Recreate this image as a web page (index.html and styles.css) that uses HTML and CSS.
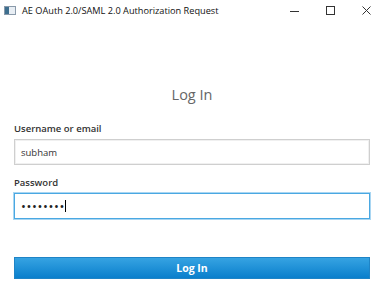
FILE: index.html
```html
<!DOCTYPE html>
<html lang="en">
<head>
    <meta charset="UTF-8">
    <title>AE OAuth 2.0/SAML 2.0 Authorization Request</title>
    <link rel="stylesheet" href="styles.css">
</head>
<body>
    <div class="titlebar">
        <svg class="app-icon" width="12" height="9" viewBox="0 0 12 9">
            <rect x="0.5" y="0.5" width="11" height="8" fill="#e8eef4" stroke="#8a9aaa"/>
            <rect x="1" y="1" width="4" height="7" fill="#3d6e8e"/>
        </svg>
        <span class="title">AE OAuth 2.0/SAML 2.0 Authorization Request</span>
        <div class="controls">
            <svg width="9" height="9" viewBox="0 0 9 9"><path d="M0 5.5h9" stroke="#333" stroke-width="1"/></svg>
            <svg width="9" height="9" viewBox="0 0 9 9"><rect x="0.5" y="0.5" width="8" height="8" fill="none" stroke="#333" stroke-width="1"/></svg>
            <svg width="9" height="9" viewBox="0 0 9 9"><path d="M0.5 0.5l8 8M8.5 0.5l-8 8" stroke="#333" stroke-width="1"/></svg>
        </div>
    </div>

    <div class="form">
        <h1>Log In</h1>

        <div class="label">Username or email</div>
        <div class="field">subham</div>

        <div class="label label-pass">Password</div>
        <div class="field field-focus"><span class="dots">••••••••</span><span class="caret"></span></div>

        <div class="button">Log In</div>
    </div>
</body>
</html>
```

FILE: styles.css
```css
* {
    margin: 0;
    padding: 0;
    box-sizing: border-box;
}

body {
    font-family: 'Open Sans', 'Noto Sans', sans-serif;
    background: #fff;
    color: #333;
    width: 381px;
    height: 298px;
    overflow: hidden;
}

.titlebar {
    height: 20px;
    display: flex;
    align-items: center;
    padding-left: 4px;
}

.app-icon {
    margin-right: 6px;
}

.title {
    font-size: 9.2px;
    color: #111;
}

.controls {
    margin-left: auto;
    display: flex;
    gap: 27px;
    padding-right: 10px;
}

.form {
    padding: 0 11px 0 14px;
}

h1 {
    margin-top: 65px;
    height: 20px;
    line-height: 20px;
    font-size: 14.5px;
    font-weight: 400;
    color: #666;
    text-align: center;
}

.label {
    margin-top: 17px;
    height: 14px;
    line-height: 14px;
    font-size: 9.5px;
    font-weight: 600;
    color: #333;
}

.label-pass {
    margin-top: 11px;
}

.field {
    margin-top: 3px;
    height: 26px;
    border: 1px solid #cfcfcf;
    box-shadow: inset 0 0 0 1px #f0f0f0;
    padding: 0 6px;
    display: flex;
    align-items: center;
    font-size: 9.5px;
    color: #333;
}

.field-focus {
    border: 1px solid #4aa8e2;
    box-shadow: 0 0 0 1px #a9d6f2;
}

.dots {
    font-size: 13px;
    letter-spacing: 0.6px;
    color: #222;
}

.caret {
    display: inline-block;
    width: 1px;
    height: 12px;
    background: #000;
}

.button {
    margin-top: 38px;
    height: 22px;
    line-height: 20px;
    border: 1px solid #1f84c6;
    background: linear-gradient(#36a3e2, #0a7fcc);
    color: #fff;
    font-size: 10.5px;
    font-weight: 700;
    text-align: center;
}
```
